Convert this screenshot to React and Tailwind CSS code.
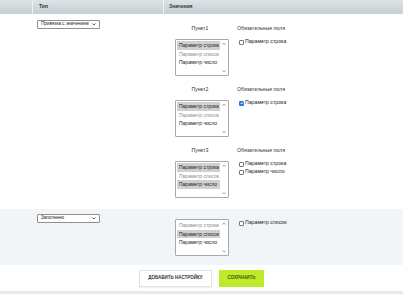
const OPTS = ["Параметр строка", "Параметр список", "Параметр число"];

function ListBox({ selected = [], muted = [] }) {
  return (
    <div className="flex h-[37px] w-[54px] rounded-[1px] border border-[#a9a9a9] bg-white">
      <div className="flex flex-1 flex-col pl-[1px] pt-[1px]">
        {OPTS.map((o, i) => (
          <div
            key={o}
            className={
              "h-[8.5px] overflow-hidden whitespace-nowrap pl-[2px] text-[5px] leading-[8.5px] " +
              (selected.includes(i) ? "bg-[#d0d0d0] " : "") +
              (muted.includes(i) ? "text-[#8c8c8c]" : "text-[#222]")
            }
          >
            {o}
          </div>
        ))}
      </div>
      <div className="flex w-[8px] flex-col items-center justify-between py-[2px] text-[#777]">
        <svg width="4" height="3" viewBox="0 0 4 3"><path d="M0.5 2.5 L2 1 L3.5 2.5" fill="none" stroke="currentColor" strokeWidth="0.7" /></svg>
        <svg width="4" height="3" viewBox="0 0 4 3"><path d="M0.5 0.5 L2 2 L3.5 0.5" fill="none" stroke="currentColor" strokeWidth="0.7" /></svg>
      </div>
    </div>
  );
}

function Check({ label, checked }) {
  return (
    <div className="flex h-[8px] items-center gap-[1px]">
      {checked ? (
        <div className="flex h-[5px] w-[5px] items-center justify-center rounded-[1px] bg-[#2f7be0]">
          <svg width="4" height="4" viewBox="0 0 4 4"><path d="M0.6 2 L1.6 3 L3.4 0.9" fill="none" stroke="white" strokeWidth="0.8" /></svg>
        </div>
      ) : (
        <div className="h-[5px] w-[5px] rounded-[1px] border border-[#777] bg-white" />
      )}
      <span className="whitespace-nowrap text-[5.2px] leading-none text-[#222]">{label}</span>
    </div>
  );
}

function Select({ value }) {
  return (
    <div className="flex h-[9px] w-[63px] items-center justify-between rounded-[1px] border border-[#8f8f8f] bg-white pl-[3px] pr-[3px]">
      <span className="whitespace-nowrap text-[4.6px] leading-none text-[#222]">{value}</span>
      <svg width="4" height="3" viewBox="0 0 4 3"><path d="M0.5 0.5 L2 2 L3.5 0.5" fill="none" stroke="#333" strokeWidth="0.8" /></svg>
    </div>
  );
}

function Block({ title, selected, muted, checks, first }) {
  return (
    <div className={"flex " + (first ? "" : "mt-[10px]")}>
      <div className="flex w-[74px] flex-col">
        <div className="h-[6px] text-center text-[5.2px] leading-[6px] text-[#333]">{title}</div>
        <div className="ml-[12px] mt-[8px]">
          <ListBox selected={selected} muted={muted} />
        </div>
      </div>
      <div className="flex flex-col">
        <div className="h-[6px] whitespace-nowrap text-[5.2px] leading-[6px] text-[#333]">Обязательные поля</div>
        <div className="ml-[2px] mt-[7px] flex flex-col">
          {checks.map((c) => (
            <Check key={c.label} label={c.label} checked={c.checked} />
          ))}
        </div>
      </div>
    </div>
  );
}

export default function App() {
  return (
    <div className="flex h-[294px] w-[403px] flex-col overflow-hidden bg-white font-['Liberation_Sans',Arial,sans-serif]">
      <div className="flex h-[14px] bg-gradient-to-b from-[#dde3e6] to-[#c6cfd4] text-[5px] font-bold text-[#333]">
        <div className="w-[32px]" />
        <div className="flex w-[131px] items-center border-l border-[#eef2f4] pl-[6px]">Тип</div>
        <div className="flex flex-1 items-center border-l border-[#eef2f4] pl-[5px]">Значения</div>
      </div>

      <div className="flex h-[195px]">
        <div className="w-[32px]" />
        <div className="w-[131px] pl-[5px] pt-[6px]">
          <Select value="Привязка с значением" />
        </div>
        <div className="flex flex-1 flex-col pt-[11px]">
          <Block first title="Пункт1" selected={[0]} muted={[1]} checks={[{ label: "Параметр строка" }]} />
          <Block title="Пункт2" selected={[0]} muted={[1]} checks={[{ label: "Параметр строка", checked: true }]} />
          <Block
            title="Пункт3"
            selected={[0, 2]}
            muted={[1]}
            checks={[{ label: "Параметр строка" }, { label: "Параметр число" }]}
          />
        </div>
      </div>

      <div className="flex h-[56px] bg-[#f2f5f7]">
        <div className="w-[32px]" />
        <div className="w-[131px] pl-[5px] pt-[5px]">
          <Select value="Заполнено" />
        </div>
        <div className="flex flex-1 pt-[10px]">
          <div className="w-[74px] pl-[12px]">
            <ListBox selected={[1]} muted={[0]} />
          </div>
          <div className="ml-[2px]">
            <Check label="Параметр список" />
          </div>
        </div>
      </div>

      <div className="flex h-[26px] items-start justify-center gap-[7px] pt-[5px]">
        <button className="flex h-[17px] w-[73px] items-center justify-center border border-[#e2e2e2] bg-white text-[4.5px] font-bold text-[#333] shadow-[0_1px_1px_rgba(0,0,0,0.05)]">
          ДОБАВИТЬ НАСТРОЙКУ
        </button>
        <button className="flex h-[17px] w-[45px] items-center justify-center bg-[#bdea2a] text-[4.5px] font-bold text-[#4a5a10]">
          СОХРАНИТЬ
        </button>
      </div>
      <div className="flex-1 bg-[#e4eaed]" />
    </div>
  );
}
